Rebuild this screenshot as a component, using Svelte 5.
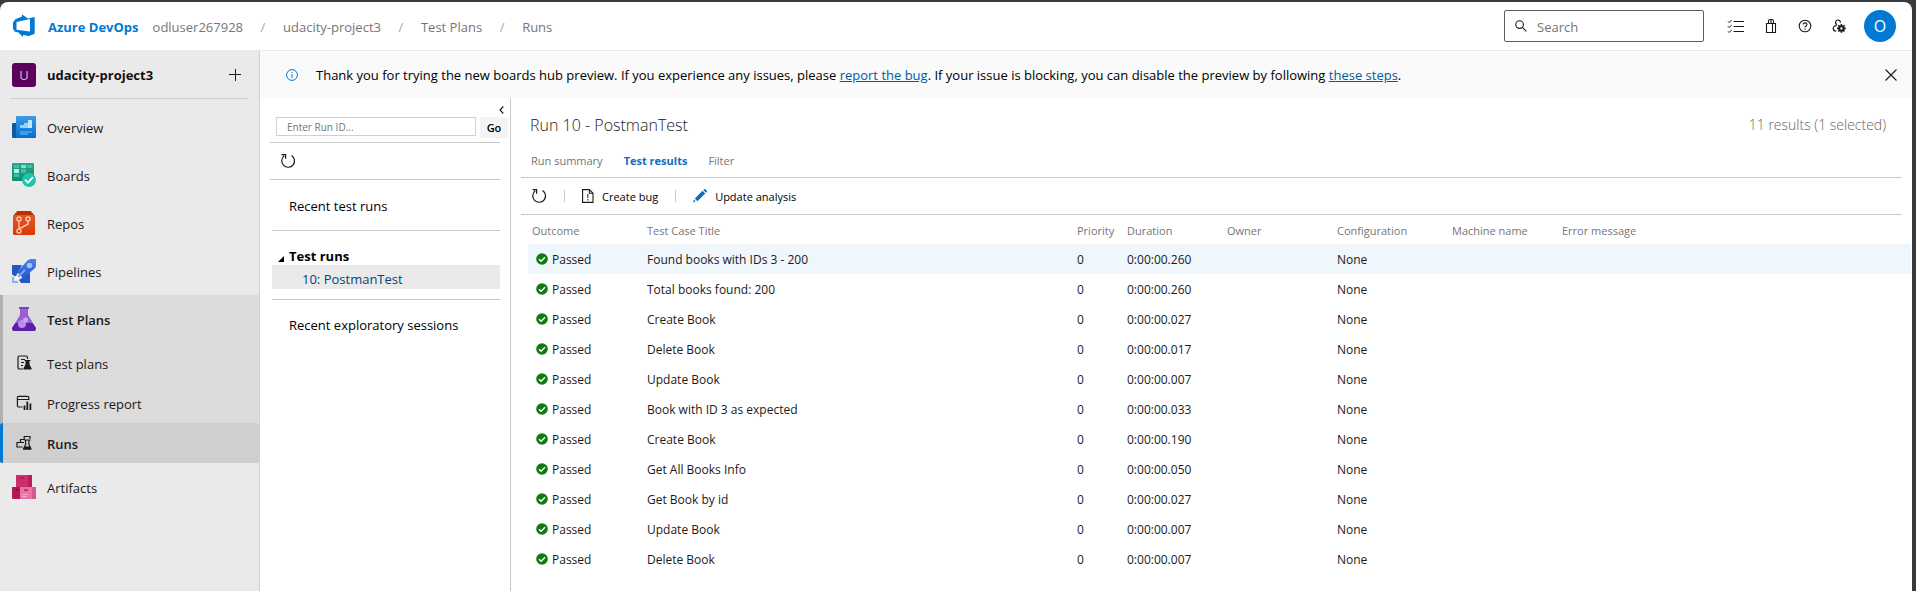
<script>
  const crumbs = ['odluser267928', 'udacity-project3', 'Test Plans', 'Runs'];
  const hubs = ['Overview', 'Boards', 'Repos', 'Pipelines'];
  const subHubs = ['Test plans', 'Progress report', 'Runs'];
  const columns = ['Outcome', 'Test Case Title', 'Priority', 'Duration', 'Owner', 'Configuration', 'Machine name', 'Error message'];
  const results = [
    ['Found books with IDs 3 - 200', '0:00:00.260'],
    ['Total books found: 200', '0:00:00.260'],
    ['Create Book', '0:00:00.027'],
    ['Delete Book', '0:00:00.017'],
    ['Update Book', '0:00:00.007'],
    ['Book with ID 3 as expected', '0:00:00.033'],
    ['Create Book', '0:00:00.190'],
    ['Get All Books Info', '0:00:00.050'],
    ['Get Book by id', '0:00:00.027'],
    ['Update Book', '0:00:00.007'],
    ['Delete Book', '0:00:00.007']
  ];
</script>

{#snippet refresh()}
  <svg width="16" height="16" viewBox="0 0 16 16" fill="none" stroke="#1b1a19" stroke-width="1.2"><path d="M11.5 2.4A6.4 6.4 0 1 1 4.2 2.8M1.6 1.6H5.6V5.8" /></svg>
{/snippet}

{#snippet hubIcon(name)}
  <svg class="hub-icon" width="24" height="24" viewBox="0 0 24 24" aria-hidden="true">
    {#if name === 'Overview'}
      <path fill="#0c59a4" d="M1 8h4v15H1a1 1 0 0 1-1-1V9a1 1 0 0 1 1-1z" />
      <path fill="url(#gBlue)" d="M5 1h18a1 1 0 0 1 1 1v20a1 1 0 0 1-1 1H4V2a1 1 0 0 1 1-1z" />
      <path fill="#9bd0fb" d="M8 10h4v3H8zM12 8h4v5h-4z" /><path fill="#c3e4ff" d="M16 5h4v8h-4z" />
      <path fill="#3f9ce8" d="M8 16h12v2H8zM8 18h8v2H8z" />
    {:else if name === 'Boards'}
      <path fill="url(#gGreen)" d="M1 0h20a1 1 0 0 1 1 1v17H1a1 1 0 0 1-1-1V1a1 1 0 0 1 1-1z" />
      <path fill="#33c6a7" d="M2 2h5v3H2zM15 2h5v3h-5zM9 6h5v4H9zM2 11h5v3H2z" /><path fill="#6ee8cf" d="M9 2h5v3H9z" /><path fill="#a6f7e6" d="M2 6h5v4H2z" />
      <circle cx="17" cy="17" r="7" fill="#1cc6a8" /><path d="M13 16.6l3 3 5-5.4" fill="none" stroke="#fff" stroke-width="1.9" />
    {:else if name === 'Repos'}
      <path fill="#bc3200" d="M5 0h14l1 2h1l1 3H2l1-3h1z" />
      <path fill="url(#gOrange)" d="M1 4h22v19a1 1 0 0 1-1 1H2a1 1 0 0 1-1-1z" />
      <g fill="none" stroke="#ffc3a8" stroke-width="1.5"><circle cx="7" cy="8" r="2" /><circle cx="16" cy="8" r="2" /><circle cx="7" cy="20" r="2" /><path d="M7 10v8M16 10v3l-9 5" /></g>
    {:else if name === 'Pipelines'}
      <path fill="#2757c6" d="M0 6h10L4 17H2l-2-2zM18 13v11H9l-2-3z" />
      <path fill="url(#gRocket)" d="M5 13L15 2c1-1 2-2 4-2h4a1 1 0 0 1 1 1v5c0 2-1 3-2 4L11 19z" />
      <circle cx="17.5" cy="6.5" r="2.8" fill="#a3bff9" /><path d="M6 18l7-7" stroke="#82a7f8" stroke-width="2" />
      <path fill="#8fb0f4" d="M0 18h2v4h4v2H0z" /><path fill="#fff" d="M5 17l2 2-1 3-1-2-3-1z" />
    {:else if name === 'Test Plans'}
      <path fill="#9b5fd3" d="M8 1h8v7l8 13c0 2-1 3-2 3H2c-1 0-2-1-2-3L8 8z" /><path fill="#5c1fa8" d="M3.5 16h17l3.5 5c0 2-1 3-2 3H2c-1 0-2-1-2-3z" />
      <path fill="#8243c4" d="M7 0h10v2H7z" /><circle cx="10" cy="17" r="4" fill="#b98bee" /><circle cx="13.5" cy="13" r="2.5" fill="#cba6f3" />
    {:else}
      <path fill="#cb2f6c" d="M4 0h16v12H4z" /><path fill="#b71e5a" d="M16 0h4v12h-4zM8 2h4v2H8z" />
      <path fill="#b0185a" d="M0 12h8v12H1a1 1 0 0 1-1-1z" /><path fill="#ed71a6" d="M8 12h16v11a1 1 0 0 1-1 1H8z" />
      <path fill="#d9568e" d="M20 12h4v12h-4z" /><path fill="#c53377" d="M12 14h4v2h-4z" /><path fill="#84103f" d="M4 14h3v2H4z" /><path fill="#f9a8cd" d="M10 19h6v1h-6zM10 21h5v1h-5z" />
    {/if}
  </svg>
{/snippet}

{#snippet subIcon(name)}
  <svg class="sub-icon" width="16" height="16" viewBox="0 0 16 16" fill="none" stroke="#1b1a19" stroke-width="1.2" aria-hidden="true">
    {#if name === 'Test plans'}
      <path d="M7 14H3.2A1.5 1.5 0 0 1 2 12.8V2.2A1.2 1.2 0 0 1 3.2 1H10a1.5 1.5 0 0 1 1.5 1.5V4M5 4.5h4M5 7.5h3M5 10.5h2" /><path fill="#1b1a19" stroke="none" d="M8.5 5h6v1h-1v3.5l2 3.7a.9.9 0 0 1-.7 1.3H8.2a.9.9 0 0 1-.7-1.3l2-3.7V6h-1z" />
    {:else if name === 'Progress report'}
      <path d="M6.5 12H2.6a1.2 1.2 0 0 1-1.2-1.2V2.6a1.2 1.2 0 0 1 1.2-1.2h9a1.2 1.2 0 0 1 1.2 1.2V5M1.4 4.5h11" /><path stroke-width="1.8" d="M8.5 10.5V15M11.3 6.5V15M14.4 8.5V15" />
    {:else}
      <path d="M6.5 12H1V7.5H4.5V4.5H8.2V1.5H14V4M5 7.5H8" /><path fill="#1b1a19" stroke="none" d="M8 4.5h6.5v1h-1v4l2 4a.9.9 0 0 1-.7 1.3H7.7a.9.9 0 0 1-.7-1.3l2-4v-4H8z" /><path fill="#cfcfcf" stroke="none" d="M10.2 5.5h2.1v4.3l1 1.7h-4l.9-1.7z" />
    {/if}
  </svg>
{/snippet}

<svg class="defs" width="0" height="0" aria-hidden="true">
  <defs>
    <linearGradient id="gBlue" x2="0" y2="1"><stop stop-color="#3f9ae6" /><stop offset="1" stop-color="#0070d2" /></linearGradient>
    <linearGradient id="gGreen" x2="0" y2="1"><stop stop-color="#2ca58b" /><stop offset="1" stop-color="#188a72" /></linearGradient>
    <linearGradient id="gOrange" x2="0" y2="1"><stop stop-color="#e0582b" /><stop offset="1" stop-color="#d93b02" /></linearGradient>
    <linearGradient id="gRocket" x2="0" y2="1"><stop stop-color="#4f80ec" /><stop offset="1" stop-color="#2459d0" /></linearGradient>
  </defs>
</svg>

<div class="window">
  <div class="app">
    <header>
      <a class="brand" href="#home">
        <svg width="24" height="24" viewBox="0 0 24 24" aria-hidden="true"><path fill="#0078d4" fill-rule="evenodd" d="M1 8.4L3.3 5.3 10 2.6V.4l6 4.2L22.7 3.1v16.6L17 22l-6-1v2L6.5 18.5 2.3 17.5V16L1 15.6zM4.5 8v7.8l13.5 1.7V5z" /></svg>
        <span>Azure DevOps</span>
      </a>
      <nav class="crumbs" aria-label="Breadcrumb">
        {#each crumbs as crumb, i}
          {#if i > 0}<span class="slash">/</span>{/if}
          <a href="#crumb">{crumb}</a>
        {/each}
      </nav>
      <label class="search">
        <svg width="12" height="12" viewBox="0 0 12 12" fill="none" stroke="#1b1a19" stroke-width="1.1" aria-hidden="true"><circle cx="4.6" cy="4.6" r="3.8" /><path d="M7.4 7.4l4 4" /></svg>
        <input type="text" placeholder="Search" aria-label="Search" />
      </label>
      <div class="actions">
        <button aria-label="Work items"><svg width="18" height="16" viewBox="0 0 18 16" fill="none" stroke="#1b1a19"><path d="M6.5 3.5H17M6.5 8.5H17M6.5 13.5H17M1 3.3l1.2 1.2L4.6 2M1 8.3l1.2 1.2L4.6 7M1 13.3l1.2 1.2L4.6 12" /></svg></button>
        <button aria-label="Marketplace"><svg width="12" height="16" viewBox="0 0 12 16" fill="none" stroke="#1b1a19" stroke-width="1.1"><path d="M1.5 5.5h9v9h-9zM7.5 5.5v9M3.5 5.5V2.9A1.4 1.4 0 0 1 5 1.5h2a1.4 1.4 0 0 1 1.4 1.4v2.6M6 1.5v4" /></svg></button>
        <button aria-label="Help"><svg width="14" height="14" viewBox="0 0 14 14" fill="none" stroke="#1b1a19" stroke-width="1.1"><circle cx="7" cy="7" r="5.8" /><path d="M5.2 5.6C5.2 3.2 8.9 3.4 8.9 5.5 8.9 7 7 7 7 8.5M7 9.6v1.2" /></svg></button>
        <button aria-label="User settings"><svg width="14" height="14" viewBox="0 0 14 14" fill="none" stroke="#1b1a19" stroke-width="1.2"><path d="M5 5.6A2.4 2.4 0 1 1 8.4 3.6M4.6 6.6C2.4 6.4 1.2 8 1.2 9.6c0 1.6 1 2.6 3 2.6" /><circle cx="9.4" cy="9.4" r="2.2" stroke-width="2" /><path stroke-width="1.6" d="M9.4 5v1.8M9.4 12v1.8M5 9.4h1.8M12 9.4h1.8M6.3 6.3l1.3 1.3M11.2 11.2l1.3 1.3M12.5 6.3l-1.3 1.3M7.6 11.2l-1.3 1.3" /></svg></button>
        <button class="avatar" aria-label="Account">O</button>
      </div>
    </header>

    <div class="body">
      <aside>
        <div class="project">
          <span class="tile">U</span>
          <strong>udacity-project3</strong>
          <button aria-label="Add"><svg width="12" height="12" viewBox="0 0 12 12" stroke="#1b1a19" fill="none"><path d="M6.5 0v12M0 5.5h12" /></svg></button>
        </div>
        <nav aria-label="Project">
          {#each hubs as hub}
            <a class="hub" href="#hub">{@render hubIcon(hub)}<span>{hub}</span></a>
          {/each}
          <div class="group">
            <a class="hub open" href="#hub">{@render hubIcon('Test Plans')}<span>Test Plans</span></a>
            {#each subHubs as sub}
              <a class="hub sub" class:current={sub === 'Runs'} href="#sub">{@render subIcon(sub)}<span>{sub}</span></a>
            {/each}
          </div>
          <a class="hub" href="#hub">{@render hubIcon('Artifacts')}<span>Artifacts</span></a>
        </nav>
      </aside>

      <div class="content">
        <div class="banner">
          <svg width="12" height="12" viewBox="0 0 12 12" fill="none" stroke="#0078d4" aria-hidden="true"><circle cx="6" cy="6" r="5.4" /><path d="M6 5v4M6 3v1" /></svg>
          <p>Thank you for trying the new boards hub preview. If you experience any issues, please <a href="#bug">report the bug</a>. If your issue is blocking, you can disable the preview by following <a href="#steps">these steps</a>.</p>
          <button aria-label="Dismiss"><svg width="12" height="12" viewBox="0 0 12 12" stroke="#1b1a19" stroke-width="1.1"><path d="M.5.5l11 11M11.5.5l-11 11" /></svg></button>
        </div>

        <div class="split">
          <section class="runs" aria-label="Test runs">
            <button class="collapse" aria-label="Collapse"><svg width="5" height="8" viewBox="0 0 5 8" fill="none" stroke="#1b1a19" stroke-width="1.1"><path d="M4.3.5L1 4l3.3 3.5" /></svg></button>
            <form class="lookup">
              <input type="text" placeholder="Enter Run ID..." aria-label="Run ID" />
              <button type="button">Go</button>
            </form>
            <div class="refresh"><button aria-label="Refresh runs">{@render refresh()}</button></div>
            <div class="tree">
              <a class="recent" href="#recent">Recent test runs</a>
              <div class="folder">
                <h2><svg width="7" height="6" viewBox="0 0 7 6" aria-hidden="true"><path d="M6 0v6H0z" /></svg>Test runs</h2>
                <a href="#run">10: PostmanTest</a>
              </div>
              <a class="sessions" href="#sessions">Recent exploratory sessions</a>
            </div>
          </section>

          <main>
            <div class="heading">
              <h1>Run 10 - PostmanTest</h1>
              <span>11 results (1 selected)</span>
            </div>
            <nav class="tabs" aria-label="Run views">
              <a href="#summary">Run summary</a>
              <a class="active" href="#results">Test results</a>
              <a href="#filter">Filter</a>
            </nav>
            <div class="toolbar">
              <button aria-label="Refresh results">{@render refresh()}</button>
              <i></i>
              <button><svg width="12" height="14" viewBox="0 0 12 14" fill="none" stroke="#1b1a19" stroke-width="1.1" aria-hidden="true"><path d="M.6.6h6.8l3.6 3.6v9.2H.6zM7.4.6v3.6H11" /><path stroke="#7a4a20" stroke-width="1.3" d="M5.8 5v4M5.8 10v1.5" /></svg><span>Create bug</span></button>
              <i></i>
              <button><svg width="14" height="14" viewBox="0 0 14 14" fill="#106ebe" aria-hidden="true"><path d="M0 14l1-3.6L2.6 12zM1.8 9.5l7.7-7.7 2.7 2.7-7.7 7.7zM10.3 1l1-1H12l2 2v.7l-1 1z" /></svg><span>Update analysis</span></button>
            </div>
            <table>
              <colgroup>
                <col class="c-outcome" /><col class="c-title" /><col class="c-priority" /><col class="c-duration" /><col class="c-owner" /><col class="c-config" /><col class="c-machine" /><col />
              </colgroup>
              <thead>
                <tr>{#each columns as column}<th scope="col">{column}</th>{/each}</tr>
              </thead>
              <tbody>
                {#each results as [title, duration], i}
                  <tr class:selected={i === 0}>
                    <td><span class="outcome"><svg width="12" height="12" viewBox="0 0 12 12" aria-hidden="true"><circle cx="6" cy="6" r="5.8" fill="#107c10" /><path d="M3 6.2l2.1 2.1L9 4.2" fill="none" stroke="#fff" stroke-width="1.4" /></svg>Passed</span></td>
                    <td>{title}</td><td>0</td><td>{duration}</td><td></td><td>None</td><td></td><td></td>
                  </tr>
                {/each}
              </tbody>
            </table>
          </main>
        </div>
      </div>
    </div>
  </div>
</div>

<style>
  :global(body) { background: #3b3a3a; }
  * { box-sizing: border-box; }
  .window { min-height: 100vh; padding: 2px 4px 0 0; font: 13px/20px "Open Sans", "Noto Sans", sans-serif; color: #1b1a19; display: flex; }
  .app { flex: 1; min-width: 0; background: #fff; border-radius: 8px 8px 0 0; display: flex; flex-direction: column; overflow: hidden; }
  .defs { position: absolute; }
  a { color: inherit; text-decoration: none; }
  button { font: inherit; color: inherit; background: none; border: 0; padding: 0; display: flex; align-items: center; justify-content: center; }
  svg { flex: none; display: block; }

  header { height: 49px; flex: none; display: flex; align-items: center; padding-right: 16px; border-bottom: 1px solid #eaeaea; }
  .brand { display: flex; align-items: center; gap: 12px; padding-left: 12px; color: #0078d4; font-weight: 700; }
  .brand span, .crumbs, .hub span, .toolbar span { padding-top: 2px; }
  .crumbs { display: flex; align-items: center; margin-left: 14px; color: #767676; flex: 1; }
  .slash { width: 40px; text-align: center; color: #a6a6a6; }
  .search { width: 200px; height: 32px; border: 1px solid #605e5c; border-radius: 2px; display: flex; align-items: center; gap: 10px; padding: 0 10px; }
  .search input { flex: 1; min-width: 0; border: 0; outline: 0; padding: 2px 0 0; font: inherit; background: none; }
  input::placeholder { color: #767676; opacity: 1; }
  .actions { display: flex; align-items: center; padding-left: 14px; }
  .actions button { width: 34px; height: 32px; }
  .actions .avatar { width: 32px; margin-left: 8px; border-radius: 50%; background: #0078d4; color: #fff; font-size: 16px; }
  .actions button:first-child { width: 36px; }

  .body { flex: 1; display: flex; }
  aside { width: 260px; flex: none; background: #eaeaea; border-right: 1px solid #d0d0d0; }
  .project { height: 48px; margin: 0 10px 4px; padding: 0 8px 0 2px; display: flex; align-items: center; gap: 11px; border-bottom: 1px solid #d0d0d0; }
  .project strong { flex: 1; color: #111; }
  .tile { width: 24px; height: 24px; line-height: 24px; border-radius: 3px; background: #5c005c; color: #d7b9d7; text-align: center; }
  .hub { display: flex; align-items: center; gap: 11px; height: 48px; padding-left: 12px; }
  .group { background: #dcdcdc; box-shadow: inset 3px 0 #b0b0b0; }
  .open { font-weight: 600; }
  .sub { height: 40px; padding-left: 16px; gap: 15px; }
  .current { background: #cfcfcf; border-left: 3px solid #0078d4; border-radius: 3px; padding-left: 13px; font-weight: 600; }

  .content { flex: 1; min-width: 0; display: flex; flex-direction: column; }
  .banner { height: 47px; background: #fafafa; display: flex; align-items: center; gap: 18px; padding: 0 15px 0 26px; }
  .banner p { margin: 0; flex: 1; color: #000; }
  .banner a { color: #005a9e; text-decoration: underline; }

  .split { flex: 1; display: flex; }
  .runs { width: 251px; flex: none; border-right: 1px solid #c8c8c8; padding: 6px 10px 0; color: #000; }
  .collapse { width: 6px; height: 12px; margin: 0 -4px 1px auto; }
  .lookup { display: flex; gap: 4px; height: 25px; margin: 0 -8px 0 6px; }
  .lookup input { flex: 1; min-width: 0; height: 19px; border: 1px solid #d0d0d0; padding: 0 10px; font: 10px/16px "Open Sans", sans-serif; outline: 0; }
  .lookup button { width: 28px; height: 21px; background: #f4f4f4; font-size: 11px; font-weight: 600; }
  .refresh { height: 38px; padding-left: 10px; border: solid #c8c8c8; border-width: 1px 0; display: flex; align-items: center; }
  .tree { margin-left: 2px; }
  .recent, .sessions { display: block; padding-left: 17px; }
  .recent { height: 51px; padding-top: 16px; border-bottom: 1px solid #c8c8c8; }
  .folder { padding: 16px 0 10px; border-bottom: 1px solid #c8c8c8; }
  .folder h2 { margin: 0; font-size: 13px; line-height: 18px; display: flex; align-items: center; gap: 4px; padding-left: 6px; }
  .folder h2 svg { margin-top: 6px; }
  .folder a { display: block; height: 24px; line-height: 28px; padding-left: 30px; background: #eaeaea; color: #004578; }
  .sessions { padding-top: 15px; }

  main { flex: 1; min-width: 0; padding-left: 10px; }
  .heading { display: flex; justify-content: space-between; padding: 13px 26px 0 9px; height: 54px; }
  h1, .heading span { margin: 0; font-size: 16px; line-height: 28px; font-weight: 300; }
  .heading span { color: #666; font-size: 14px; }
  .tabs, .toolbar { margin-right: 10px; padding-left: 10px; border-bottom: 1px solid #c8c8c8; font-size: 11px; }
  .tabs { display: flex; gap: 21px; height: 26px; color: #767676; line-height: 18px; }
  .tabs .active { color: #106ebe; font-weight: 700; }
  .toolbar { height: 37px; display: flex; align-items: center; color: #000; }
  .toolbar button { gap: 8px; }
  .toolbar i { width: 1px; height: 12px; background: #c8c8c8; margin: 0 17px; }

  table { width: 100%; border-spacing: 0; table-layout: fixed; padding: 0 1px 0 7px; font-size: 12px; }
  .c-outcome { width: 115px; } .c-title { width: 430px; } .c-priority { width: 50px; } .c-duration { width: 100px; }
  .c-owner { width: 110px; } .c-config { width: 115px; } .c-machine { width: 110px; }
  th { height: 29px; padding: 2px 0 0 4px; font-size: 11px; font-weight: 400; text-align: left; color: #767676; }
  td { height: 30px; padding: 2px 0 0 4px; white-space: nowrap; }
  .selected { background: #eff6fc; }
  .outcome { display: flex; align-items: center; gap: 4px; padding-left: 4px; }
  .outcome svg { margin-bottom: 2px; }
</style>
